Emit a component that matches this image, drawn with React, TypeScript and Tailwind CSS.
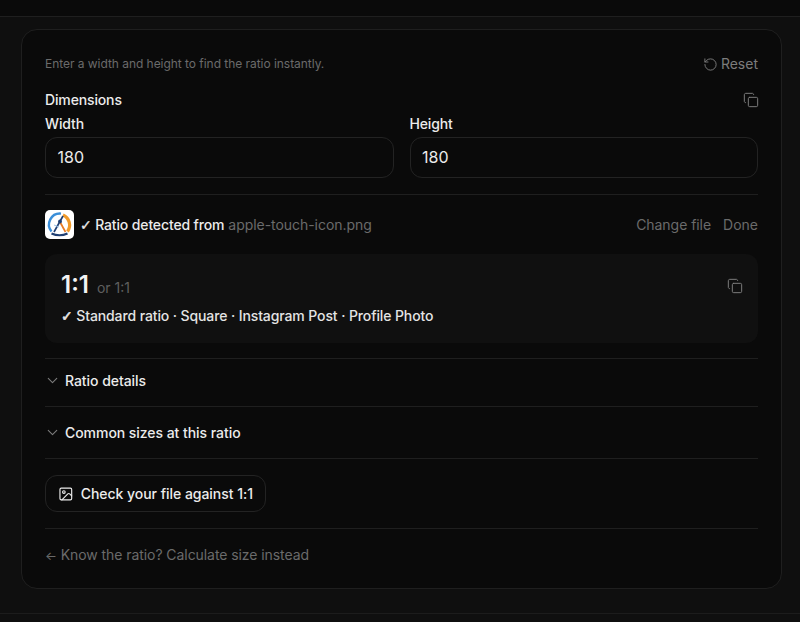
import { ChevronDown, Copy, Image, RotateCcw } from "lucide-react";

function AppIcon() {
  return (
    <div className="flex h-[29px] w-[29px] shrink-0 items-center justify-center rounded-[5px] bg-white">
      <svg viewBox="0 0 29 29" className="h-[29px] w-[29px]" fill="none">
        <path d="M6.5 21.5A11 11 0 0 1 16 3.6" stroke="#3b8fd9" strokeWidth="2.4" />
        <path d="M18 5A11 11 0 0 1 22.5 21.5" stroke="#f09a2a" strokeWidth="3.2" />
        <path d="M6.5 23.5Q14.5 27 22.5 23.5" stroke="#1f3f73" strokeWidth="2.2" />
        <path d="M18 6L9 22" stroke="#1f3f73" strokeWidth="1.7" />
        <path d="M15 12L20.5 22" stroke="#ea7b24" strokeWidth="1.7" />
        <path d="M9 15L14 17" stroke="#9cc4e8" strokeWidth="1" />
        <circle cx="15" cy="11.5" r="1.9" fill="#1f3f73" />
      </svg>
    </div>
  );
}

function Field({ label }: { label: string }) {
  return (
    <div className="flex-1">
      <div className="mb-[3px] text-sm leading-[20px] font-medium tracking-[-0.14px] text-[#ececec]">{label}</div>
      <div className="flex h-[41px] items-center rounded-[12px] border border-[#232323] px-[11.5px] pb-[1px] text-base text-[#ececec]">
        180
      </div>
    </div>
  );
}

function Section({ label }: { label: string }) {
  return (
    <div className="flex items-center gap-[4px] text-sm font-medium tracking-[-0.05px] text-[#ececec]">
      <ChevronDown className="-ml-[1px] h-[17px] w-[17px] text-[#7c7c7c]" strokeWidth={1.5} />
      {label}
    </div>
  );
}

export default function App() {
  return (
    <div className="h-[622px] overflow-hidden bg-[#0f0f0f] font-['Inter',sans-serif]">
      <div className="h-[17px] border-b border-[#1f1f1f] bg-[#0a0a0a]" />
      <div className="pt-3 pr-[18px] pl-[21px]">
        <div className="h-[560px] rounded-[16px] border border-[#1f1f1f] bg-[#0a0a0a] px-[23px] pt-[25px]">
          <div className="flex items-center justify-between">
            <p className="text-xs leading-[18px] tracking-[-0.04px] text-[#6b6b6b]">
              Enter a width and height to find the ratio instantly.
            </p>
            <button className="flex items-center gap-[3px] text-sm leading-[18px] text-[#7c7c7c]">
              <RotateCcw className="h-[15px] w-[15px]" strokeWidth={1.5} />
              Reset
            </button>
          </div>

          <div className="mt-[17px] flex items-center justify-between">
            <div className="text-sm leading-[20px] font-medium tracking-[-0.14px] text-[#ececec]">Dimensions</div>
            <Copy className="-mr-[1px] h-4 w-4 text-[#7c7c7c]" strokeWidth={1.5} />
          </div>
          <div className="mt-[4px] flex gap-4">
            <Field label="Width" />
            <Field label="Height" />
          </div>

          <div className="mt-4 border-t border-[#1f1f1f] pt-[15px]">
            <div className="flex items-center justify-between">
              <div className="flex items-center gap-[6px] text-sm">
                <AppIcon />
                <span className="font-medium tracking-[-0.14px] text-[#ececec]">
                  <span className="font-['DejaVu_Sans',sans-serif] [-webkit-text-stroke:0.3px]">✓</span> Ratio detected from
                </span>
                <span className="-ml-[2px] tracking-[-0.05px] text-[#6b6b6b]">apple-touch-icon.png</span>
              </div>
              <div className="flex gap-3 text-sm text-[#6b6b6b]">
                <span className="tracking-[-0.05px]">Change file</span>
                <span>Done</span>
              </div>
            </div>

            <div className="mt-[15px] h-[89px] rounded-[12px] bg-[#101010] px-4 pt-[15px]">
              <div className="flex items-center justify-between">
                <div className="flex items-baseline gap-2">
                  <span className="text-2xl leading-[32px] font-semibold text-[#f2f2f2]">1:1</span>
                  <span className="text-sm text-[#5f5f5f]">or 1:1</span>
                </div>
                <Copy className="mt-[2px] -mr-[1px] h-4 w-4 text-[#7c7c7c]" strokeWidth={1.5} />
              </div>
              <div className="mt-[5px] text-sm leading-[20px] font-medium tracking-[-0.11px] text-[#e4e4e4]">
                <span className="font-['DejaVu_Sans',sans-serif] [-webkit-text-stroke:0.6px]">✓</span> Standard ratio · Square · Instagram Post · Profile Photo
              </div>
            </div>
          </div>

          <div className="mt-[15px] flex h-[48px] items-center border-t border-[#1f1f1f] pb-[4px]">
            <Section label="Ratio details" />
          </div>
          <div className="flex h-[52px] items-center border-t border-[#1f1f1f]">
            <Section label="Common sizes at this ratio" />
          </div>
          <div className="border-t border-[#1f1f1f] pt-4 pb-4">
            <button className="flex h-[37px] w-[221px] items-center gap-[7px] rounded-[12px] border border-[#232323] px-3 text-sm font-medium tracking-[-0.03px] whitespace-nowrap text-[#ececec]">
              <Image className="h-4 w-4" strokeWidth={1.75} />
              Check your file against 1:1
            </button>
          </div>
          <div className="border-t border-[#1f1f1f] pt-[16px] text-sm leading-[20px] tracking-[-0.07px] text-[#6b6b6b]">
            <span className="text-[12.5px]">←</span> Know the ratio? Calculate size instead
          </div>
        </div>
      </div>
      <div className="mt-[24px] border-t border-[#1c1c1c]" />
    </div>
  );
}
